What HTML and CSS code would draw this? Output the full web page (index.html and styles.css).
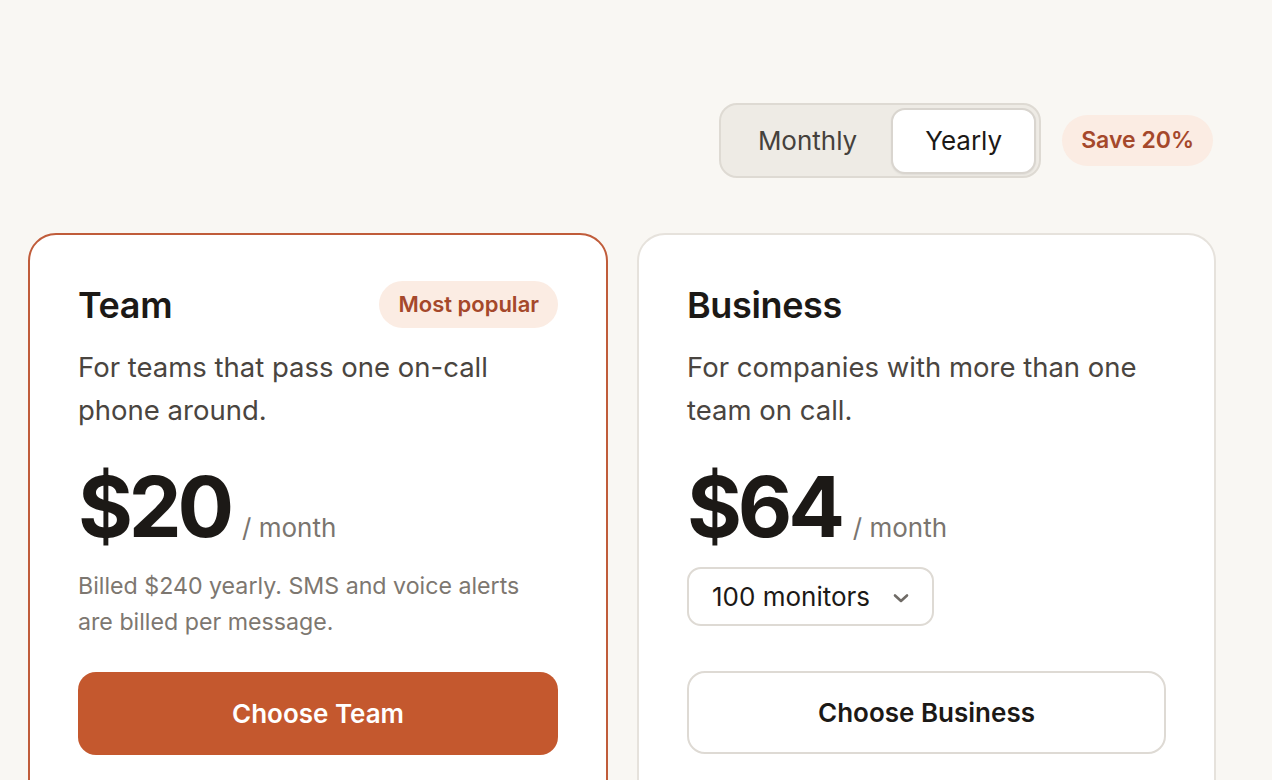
FILE: index.html
```html
<!DOCTYPE html>
<html lang="en">
<head>
<meta charset="utf-8">
<title>Pricing</title>
<link rel="stylesheet" href="styles.css">
</head>
<body>
<main class="page">
  <div class="toolbar">
    <div class="toggle">
      <button class="seg">Monthly</button>
      <button class="seg seg-active">Yearly</button>
    </div>
    <span class="save">Save 20%</span>
  </div>
  <div class="cards">
    <section class="card card-featured">
      <div class="card-head">
        <h2 class="plan">Team</h2>
        <span class="badge">Most popular</span>
      </div>
      <p class="desc">For teams that pass one on-call phone around.</p>
      <div class="price-row">
        <span class="price">$20</span>
        <span class="per">/ month</span>
      </div>
      <p class="note">Billed $240 yearly. SMS and voice alerts are billed per message.</p>
      <button class="cta cta-primary">Choose Team</button>
    </section>
    <section class="card">
      <div class="card-head">
        <h2 class="plan">Business</h2>
      </div>
      <p class="desc">For companies with more than one team on call.</p>
      <div class="price-row">
        <span class="price">$64</span>
        <span class="per">/ month</span>
      </div>
      <div class="select">
        <span>100 monitors</span>
        <svg class="chev" width="18" height="12" viewBox="0 0 18 12" aria-hidden="true"><path d="M3 3.5 L9 9 L15 3.5" fill="none" stroke="#6f6b66" stroke-width="2.6" stroke-linecap="round" stroke-linejoin="round"/></svg>
      </div>
      <button class="cta cta-secondary">Choose Business</button>
    </section>
  </div>
</main>
</body>
</html>
```
FILE: styles.css
```css
* { box-sizing: border-box; }
html, body { margin: 0; padding: 0; }
body {
  background: #f9f7f3;
  font-family: "Inter", "Noto Sans", sans-serif;
  color: #1c1916;
  height: 780px;
  overflow: hidden;
}
.page {
  padding: 103px 57px 0 28px;
}
.toolbar {
  display: flex;
  justify-content: flex-end;
  align-items: center;
  gap: 21px;
  padding-right: 2px;
}
.toggle {
  display: flex;
  align-items: center;
  background: #eeebe5;
  border: 2px solid #dedad3;
  border-radius: 18px;
  padding: 3px;
  height: 75px;
}
.seg {
  font-family: inherit;
  font-size: 26px;
  color: #45413c;
  background: transparent;
  border: none;
  height: 66px;
  padding: 0 34px;
  border-radius: 14px;
  cursor: pointer;
}
.seg-active {
  background: #ffffff;
  color: #1c1916;
  border: 2px solid #d9d5cf;
  box-shadow: 0 1px 2px rgba(0,0,0,0.06);
  padding: 0 32px;
}
.save {
  background: #fbece3;
  color: #a5482b;
  font-size: 23px;
  font-weight: 600;
  height: 51px;
  line-height: 51px;
  padding: 0 19px;
  border-radius: 26px;
}
.cards {
  display: grid;
  grid-template-columns: 580px 579px;
  gap: 29px;
  margin-top: 55px;
}
.card {
  background: #ffffff;
  border: 2px solid #e6e2dc;
  border-radius: 28px;
  padding: 46px 48px 60px 48px;
  min-height: 600px;
}
.card-featured {
  border-color: #c05c3a;
}
.card-head {
  display: flex;
  justify-content: space-between;
  align-items: center;
  height: 47px;
}
.plan {
  margin: 0;
  font-size: 36px;
  font-weight: 600;
  letter-spacing: -0.01em;
  color: #1c1916;
}
.badge {
  background: #fbece3;
  color: #a5482b;
  font-size: 22px;
  font-weight: 600;
  height: 47px;
  line-height: 47px;
  padding: 0 19px;
  border-radius: 24px;
}
.desc {
  margin: 18px 0 0 0;
  font-size: 27.5px;
  line-height: 43px;
  color: #4a4540;
  max-width: 460px;
}
.price-row {
  display: flex;
  align-items: baseline;
  gap: 12px;
  margin-top: 27px;
  height: 96px;
}
.price {
  font-size: 84px;
  font-weight: 700;
  letter-spacing: -0.05em;
  line-height: 96px;
  color: #1c1916;
}
.per {
  font-size: 26px;
  color: #7a756f;
}
.note {
  margin: 13px 0 0 0;
  font-size: 23.2px;
  line-height: 36px;
  color: #7d7770;
  max-width: 460px;
}
.select {
  display: inline-flex;
  align-items: center;
  gap: 22px;
  height: 59px;
  margin-top: 12px;
  padding: 0 22px 0 23px;
  border: 2px solid #dedad4;
  border-radius: 14px;
  font-size: 26px;
  color: #1c1916;
}
.chev { margin-top: 2px; }
.cta {
  display: block;
  width: 100%;
  height: 83px;
  border-radius: 18px;
  font-family: inherit;
  font-size: 26px;
  font-weight: 600;
  cursor: pointer;
}
.cta-primary {
  margin-top: 32px;
  background: #c4582e;
  color: #ffffff;
  border: none;
}
.cta-secondary {
  margin-top: 45px;
  background: #ffffff;
  color: #1c1916;
  border: 2px solid #dedad4;
}
```
